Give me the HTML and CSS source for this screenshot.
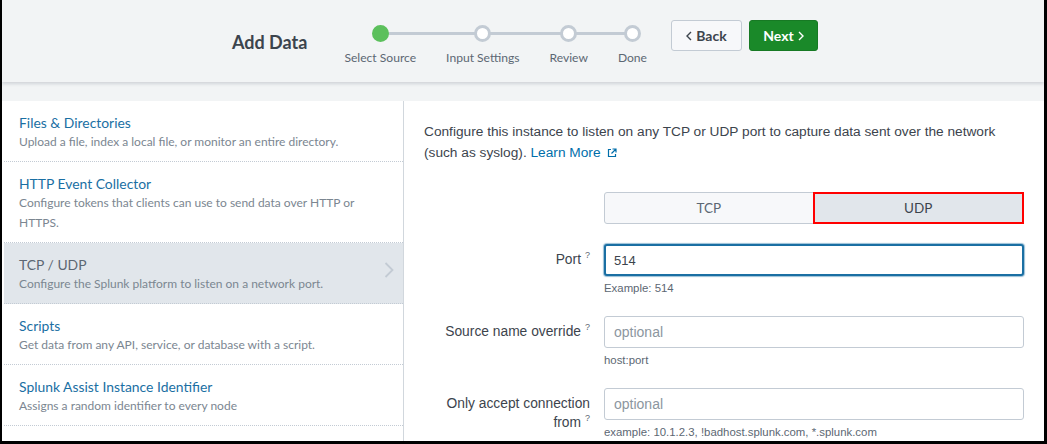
FILE: index.html
```html
<!DOCTYPE html>
<html lang="en">
<head>
<meta charset="utf-8">
<title>Add Data</title>
<link rel="stylesheet" href="styles.css">
</head>
<body>
<div class="frame">
  <header class="header">
    <h1 class="title">Add Data</h1>
    <ol class="steps">
      <li class="step is-done"><span class="dot"></span><span class="step-label">Select Source</span></li>
      <li class="step"><span class="dot"></span><span class="step-label">Input Settings</span></li>
      <li class="step"><span class="dot"></span><span class="step-label">Review</span></li>
      <li class="step"><span class="dot"></span><span class="step-label">Done</span></li>
    </ol>
    <div class="actions">
      <button class="btn btn-back" type="button"><svg class="chev" width="6" height="10" viewBox="0 0 6 10"><polyline points="5,1 1,5 5,9" fill="none" stroke="currentColor" stroke-width="1.4"/></svg>Back</button>
      <button class="btn btn-next" type="button">Next<svg class="chev" width="6" height="10" viewBox="0 0 6 10"><polyline points="1,1 5,5 1,9" fill="none" stroke="currentColor" stroke-width="1.4"/></svg></button>
    </div>
  </header>

  <main class="main">
    <nav class="sources">
      <div class="source">
        <div class="source-text">
          <div class="source-title">Files &amp; Directories</div>
          <div class="source-desc">Upload a file, index a local file, or monitor an entire directory.</div>
        </div>
      </div>
      <div class="source">
        <div class="source-text">
          <div class="source-title">HTTP Event Collector</div>
          <div class="source-desc">Configure tokens that clients can use to send data over HTTP or HTTPS.</div>
        </div>
      </div>
      <div class="source is-selected">
        <div class="source-text">
          <div class="source-title">TCP / UDP</div>
          <div class="source-desc">Configure the Splunk platform to listen on a network port.</div>
        </div>
        <svg class="source-chev" width="10" height="16" viewBox="0 0 10 16"><polyline points="1.5,1 8.5,8 1.5,15" fill="none" stroke="#c3cbd4" stroke-width="1.8"/></svg>
      </div>
      <div class="source">
        <div class="source-text">
          <div class="source-title">Scripts</div>
          <div class="source-desc">Get data from any API, service, or database with a script.</div>
        </div>
      </div>
      <div class="source">
        <div class="source-text">
          <div class="source-title">Splunk Assist Instance Identifier</div>
          <div class="source-desc">Assigns a random identifier to every node</div>
        </div>
      </div>
    </nav>

    <section class="content">
      <p class="intro">Configure this instance to listen on any TCP or UDP port to capture data sent over the network (such as syslog). <a class="link" href="#">Learn More<svg class="ext" width="10" height="10" viewBox="0 0 10 10"><path d="M4 1.5H1.5v7h7V6" fill="none" stroke="currentColor" stroke-width="1.2"/><path d="M5.5 1h3.5v3.5M9 1L4.5 5.5" fill="none" stroke="currentColor" stroke-width="1.2"/></svg></a></p>

      <div class="form">
        <div class="row">
          <div class="label"></div>
          <div class="control">
            <div class="toggle">
              <button class="toggle-btn" type="button">TCP</button>
              <button class="toggle-btn is-active" type="button">UDP</button>
            </div>
          </div>
        </div>

        <div class="row">
          <label class="label">Port<sup class="tip">?</sup></label>
          <div class="control">
            <input class="input is-focus" type="text" value="514">
            <div class="help">Example: 514</div>
          </div>
        </div>

        <div class="row">
          <label class="label">Source name override<sup class="tip">?</sup></label>
          <div class="control">
            <input class="input" type="text" placeholder="optional">
            <div class="help">host:port</div>
          </div>
        </div>

        <div class="row">
          <label class="label">Only accept connection from<sup class="tip">?</sup></label>
          <div class="control">
            <input class="input" type="text" placeholder="optional">
            <div class="help">example: 10.1.2.3, !badhost.splunk.com, *.splunk.com</div>
          </div>
        </div>
      </div>
    </section>
  </main>
</div>
</body>
</html>
```

FILE: styles.css
```css
* { box-sizing: border-box; }

html, body {
  margin: 0;
  padding: 0;
  background: #000;
}

.frame {
  margin: 0 3px 0 2px;
  height: 441px;
  overflow: hidden;
  background: #f2f4f5;
  font-family: "Lato", "Liberation Sans", sans-serif;
}

/* ---------- header ---------- */
.header {
  position: relative;
  z-index: 1;
  height: 82px;
  background: #f2f4f5;
  box-shadow: 0 2px 3px rgba(60, 70, 90, 0.18);
  display: flex;
  justify-content: center;
  align-items: flex-start;
  padding: 20px 0 0 4px;
}

.title {
  margin: 11px 37px 0 0;
  font-size: 18px;
  line-height: 22px;
  font-weight: 700;
  color: #3c444d;
}

.steps {
  list-style: none;
  margin: 5px 0 0 0;
  padding: 0;
  display: flex;
  gap: 30px;
}

.step {
  position: relative;
  display: flex;
  flex-direction: column;
  align-items: center;
}

.step::before,
.step::after {
  content: "";
  position: absolute;
  top: 7px;
  height: 3px;
  background: #c3cbd4;
}

.step::before { left: -15px; right: 50%; }
.step::after { left: 50%; right: -15px; }
.step:first-child::before { display: none; }
.step:last-child::after { display: none; }

.dot {
  position: relative;
  z-index: 1;
  width: 17px;
  height: 17px;
  border-radius: 50%;
  border: 3px solid #c3cbd4;
  background: #fff;
}

.step.is-done .dot {
  background: #5cc05c;
  border-color: #5cc05c;
}

.step-label {
  margin-top: 9px;
  font-size: 12.1px;
  line-height: 14px;
  color: #5c6773;
  white-space: nowrap;
}

.actions {
  margin-left: 24px;
  display: flex;
  gap: 7px;
}

.btn {
  height: 31px;
  border-radius: 3px;
  font-family: "Lato", "Liberation Sans", sans-serif;
  font-weight: 700;
  font-size: 14px;
  display: flex;
  align-items: center;
  justify-content: center;
  gap: 4px;
  padding: 0;
  cursor: pointer;
}

.btn-back {
  width: 71px;
  background: #f7f8fa;
  border: 1px solid #c3cbd4;
  color: #3c444d;
}

.btn-next {
  width: 69px;
  background: #1a8929;
  border: 1px solid #177a24;
  color: #fff;
}

/* ---------- main ---------- */
.main {
  margin-top: 19px;
  height: 340px;
  background: #fff;
  display: flex;
}

.sources {
  width: 402px;
  padding-left: 2px;
  border-right: 1px solid #d1d7dd;
  display: flex;
  flex-direction: column;
}

.source {
  display: flex;
  align-items: flex-start;
  padding: 12px 9px 9px 15px;
  border-bottom: 1px dotted #c3cbd4;
}

.source-text { flex: 1; }

.source-title {
  font-size: 13.9px;
  line-height: 19px;
  color: #1a6fa3;
}

.source-desc {
  font-size: 12px;
  line-height: 20px;
  color: #7b8691;
  padding-right: 10px;
}

.source.is-selected {
  background: #e1e6eb;
}

.source.is-selected .source-title {
  color: #5c6773;
}

.source-chev {
  margin-top: 7px;
  flex: none;
}

.content {
  flex: 1;
  padding: 20px 20px 0 20px;
  font-family: "Liberation Sans", Arial, sans-serif;
}

.intro {
  margin: 0;
  font-size: 13.7px;
  line-height: 21px;
  color: #3c444d;
}

.link {
  color: #006eaa;
  text-decoration: none;
}

.ext {
  margin-left: 6px;
  vertical-align: -1px;
}

.form {
  margin-top: 29px;
  display: flex;
  flex-direction: column;
  gap: 20px;
}

.row {
  display: grid;
  grid-template-columns: 170px 420px;
  column-gap: 10px;
}

.label {
  text-align: right;
  padding: 6px 4px 0 0;
  font-size: 13.8px;
  line-height: 19px;
  color: #3c444d;
}

.tip {
  display: inline-block;
  font-size: 9px;
  line-height: 9px;
  color: #5c6773;
  vertical-align: top;
  margin: 1px 0 0 4px;
}

.toggle {
  display: flex;
  height: 32px;
  border: 1px solid #c3cbd4;
  border-radius: 3px;
  background: #f7f8fa;
}

.toggle-btn {
  flex: 1;
  border: 0;
  background: transparent;
  font-family: "Lato", "Liberation Sans", sans-serif;
  font-size: 13.5px;
  color: #5c6773;
  padding: 0;
}

.toggle-btn.is-active {
  background: #e1e6eb;
  border: 2px solid #f00;
  margin: -1px -1px -1px 0;
  color: #3c444d;
}

.input {
  display: block;
  width: 100%;
  height: 32px;
  border: 1px solid #c3cbd4;
  border-radius: 3px;
  padding: 0 9px;
  font-family: "Liberation Sans", Arial, sans-serif;
  font-size: 13px;
  color: #3c444d;
  background: #fff;
  outline: none;
}

.input::placeholder {
  color: #8c96a0;
  font-size: 14px;
}

.input.is-focus {
  border: 2px solid #1a6fa3;
  box-shadow: 0 0 1px 1px rgba(26, 111, 163, 0.45);
  padding-left: 8px;
}

.help {
  margin-top: 4px;
  font-size: 11.4px;
  line-height: 16px;
  color: #5c6773;
}
```
